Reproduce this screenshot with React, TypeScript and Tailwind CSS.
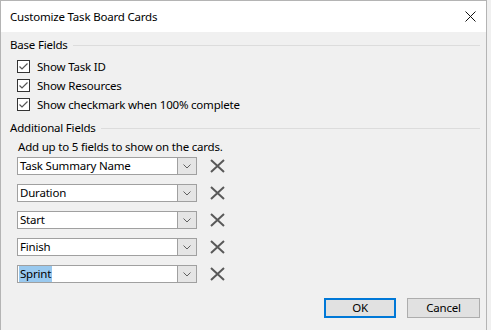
import { useState } from "react";

const fields = ["Task Summary Name", "Duration", "Start", "Finish", "Sprint"];
const baseFields = ["Show Task ID", "Show Resources", "Show checkmark when 100% complete"];

function CheckBox({ checked }: { checked: boolean }) {
  return (
    <svg width="13" height="13" viewBox="0 0 13 13" className="shrink-0">
      <rect x="0.5" y="0.5" width="12" height="12" fill="#fff" stroke="#333" />
      {checked && <path d="M2.5 6.5 L5 9 L10.5 3.5" fill="none" stroke="#555" strokeWidth="1.2" />}
    </svg>
  );
}

function GroupHeader({ label }: { label: string }) {
  return (
    <div className="flex items-center h-4 pr-[6px]">
      <span>{label}</span>
      <div className="flex-1 ml-[5px] h-px bg-[#dcdcdc]" />
    </div>
  );
}

function FieldRow({ value, selected }: { value: string; selected?: boolean }) {
  return (
    <div className="flex items-center h-[18px]">
      <div className="w-[180px] h-[18px] flex border border-[#a0a0a0] bg-white">
        <div className="flex-1 flex items-center pl-[1px]">
          <span className={selected ? "bg-[#99c9ef] px-[1px] leading-[16px]" : "px-[1px] leading-[16px]"}>{value}</span>
        </div>
        <div className="w-[19px] bg-[#e5e5e5] border-l border-[#a0a0a0] flex items-center justify-center">
          <svg width="8" height="5" viewBox="0 0 8 5">
            <path d="M0.5 0.5 L4 4 L7.5 0.5" fill="none" stroke="#606060" strokeWidth="1" />
          </svg>
        </div>
      </div>
      <button className="ml-[12px] w-[16px] h-[16px] flex items-center justify-center">
        <svg width="15" height="14" viewBox="0 0 15 14">
          <path d="M1 1 L14 13 M14 1 L1 13" stroke="#595959" strokeWidth="2" />
        </svg>
      </button>
    </div>
  );
}

export default function App() {
  const [checks] = useState([true, true, true]);

  return (
    <div
      className="w-[491px] h-[330px] bg-[#f0f0f0] text-[11.5px] tracking-[-0.2px] text-black overflow-hidden"
      style={{ fontFamily: '"Noto Sans", "Segoe UI", sans-serif' }}
    >
      <div className="w-[487px] h-[330px] border-l border-t border-r border-[#b4b4b4] bg-[#f0f0f0] flex flex-col">
        {/* Title bar */}
        <div className="h-[31px] bg-white flex items-center justify-between pl-[9px] pr-[10px] shrink-0">
          <span>Customize Task Board Cards</span>
          <svg width="11" height="11" viewBox="0 0 11 11">
            <path d="M0.5 0.5 L10.5 10.5 M10.5 0.5 L0.5 10.5" stroke="#111" strokeWidth="1" />
          </svg>
        </div>

        <div className="pl-[9px] pt-[5px] flex flex-col leading-4">
          <GroupHeader label="Base Fields" />
          <div className="mt-[4px] pl-[7px] flex flex-col">
            {baseFields.map((f, i) => (
              <label key={f} className="h-[19px] flex items-center gap-[7px]">
                <CheckBox checked={checks[i]} />
                <span>{f}</span>
              </label>
            ))}
          </div>

          <div className="mt-[6px]">
            <GroupHeader label="Additional Fields" />
          </div>
          <div className="pl-[8px] mt-[3px]">Add up to 5 fields to show on the cards.</div>
          <div className="pl-[7px] mt-[2px] flex flex-col gap-[9px]">
            {fields.map((f, i) => (
              <FieldRow key={f} value={f} selected={i === fields.length - 1} />
            ))}
          </div>

          <div className="mt-[15px] flex justify-end gap-[11px] pr-[6px]">
            <button className="w-[72px] h-[20px] bg-[#e1e1e1] border-2 border-[#0078d7] leading-none">OK</button>
            <button className="w-[73px] h-[20px] bg-[#e1e1e1] border border-[#adadad] leading-none">Cancel</button>
          </div>
        </div>
      </div>
    </div>
  );
}
